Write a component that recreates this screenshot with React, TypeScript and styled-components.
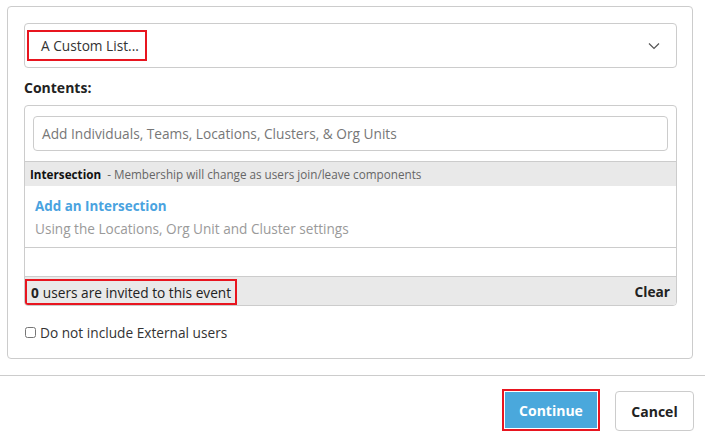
import styled, { createGlobalStyle } from "styled-components";

const GlobalStyle = createGlobalStyle`
  html, body {
    margin: 0;
    padding: 0;
    background: #fff;
  }
  body {
    font-family: "Open Sans", "Liberation Sans", Arial, sans-serif;
    color: #333;
  }
`;

const Page = styled.div`
  width: 705px;
  height: 435px;
  display: flex;
  flex-direction: column;
  box-sizing: border-box;
  padding-top: 6px;
  overflow: hidden;
`;

const Panel = styled.div`
  box-sizing: border-box;
  margin: 0 12px 0 7px;
  height: 353px;
  border: 1px solid #cccccc;
  border-radius: 4px;
  padding: 16px 15px 0 16px;
  display: flex;
  flex-direction: column;
`;

const Select = styled.div`
  box-sizing: border-box;
  height: 45px;
  border: 1px solid #cccccc;
  border-radius: 4px;
  display: flex;
  align-items: center;
  justify-content: space-between;
  padding: 0 16px 0 2px;
`;

const Highlight = styled.span`
  box-sizing: border-box;
  display: inline-flex;
  align-items: center;
  border: 2px solid #e8151f;
`;

const SelectValue = styled(Highlight)`
  height: 31px;
  padding: 0 6px 0 12px;
  font-size: 13.7px;
  color: #333;
`;

const Label = styled.div`
  margin-top: 10px;
  font-size: 14px;
  font-weight: 700;
  color: #222;
  line-height: 20px;
`;

const ContentsBox = styled.div`
  box-sizing: border-box;
  margin-top: 7px;
  height: 201px;
  border: 1px solid #cccccc;
  border-radius: 4px;
  display: flex;
  flex-direction: column;
  overflow: hidden;
`;

const InputWrap = styled.div`
  padding: 10px 8px;
`;

const SearchInput = styled.div`
  box-sizing: border-box;
  height: 35px;
  border: 1px solid #cccccc;
  border-radius: 4px;
  display: flex;
  align-items: center;
  padding-left: 8px;
  font-size: 13.7px;
  color: #777;
`;

const GrayBar = styled.div`
  box-sizing: border-box;
  background: #e9e9e9;
  border-top: 1px solid #cccccc;
  display: flex;
  align-items: center;
`;

const IntersectionBar = styled(GrayBar)`
  height: 25px;
  padding-left: 5px;
  font-size: 11.7px;
  color: #666;
  white-space: nowrap;

  b {
    color: #111;
    font-weight: 700;
    margin-right: 6px;
  }
`;

const IntersectionBody = styled.div`
  box-sizing: border-box;
  height: 61px;
  padding: 10px 10px 0;
  display: flex;
  flex-direction: column;
  gap: 3px;
`;

const AddLink = styled.a`
  font-size: 13.4px;
  font-weight: 700;
  color: #4aa3df;
  text-decoration: none;
  line-height: 20px;
`;

const Hint = styled.div`
  font-size: 13.6px;
  color: #9a9a9a;
  line-height: 20px;
`;

const Spacer = styled.div`
  height: 28px;
  border-top: 1px solid #cccccc;
`;

const CountBar = styled(GrayBar)`
  flex: 1;
  justify-content: space-between;
  align-items: flex-end;
  padding-right: 6px;
`;

const CountText = styled(Highlight)`
  height: 26px;
  padding: 0 4px 0 4px;
  font-size: 13.7px;
  color: #222;
  b {
    margin-right: 4px;
  }
`;

const ClearLink = styled.span`
  font-size: 13.7px;
  font-weight: 700;
  color: #222;
  align-self: center;
`;

const CheckRow = styled.label`
  display: flex;
  align-items: center;
  margin-top: 17px;
  font-size: 13.7px;
  color: #333;
  gap: 4px;

  input {
    margin: 0 0 0 1px;
    width: 11px;
    height: 11px;
  }
`;

const Divider = styled.div`
  margin-top: 16px;
  border-top: 1px solid #cccccc;
`;

const Actions = styled.div`
  display: flex;
  justify-content: flex-end;
  align-items: center;
  gap: 15px;
  padding: 13px 11px 0 0;
`;

const PrimaryFrame = styled(Highlight)`
  width: 98px;
  height: 42px;
  padding: 1px;
`;

const PrimaryButton = styled.button`
  width: 100%;
  height: 100%;
  border: none;
  background: #4aa8dc;
  color: #fff;
  font-family: inherit;
  font-size: 14px;
  font-weight: 700;
`;

const SecondaryButton = styled.button`
  box-sizing: border-box;
  width: 79px;
  height: 40px;
  border: 1px solid #cccccc;
  border-radius: 4px;
  background: #fff;
  color: #222;
  font-family: inherit;
  font-size: 14px;
  font-weight: 700;
  margin-top: 2px;
`;

function Chevron() {
  return (
    <svg width="12" height="8" viewBox="0 0 12 8" fill="none">
      <path d="M1 1.5 L6 6.5 L11 1.5" stroke="#555" strokeWidth="1.2" />
    </svg>
  );
}

export default function App() {
  return (
    <>
      <GlobalStyle />
      <Page>
        <Panel>
          <Select>
            <SelectValue>A Custom List...</SelectValue>
            <Chevron />
          </Select>
          <Label>Contents:</Label>
          <ContentsBox>
            <InputWrap>
              <SearchInput>
                Add Individuals, Teams, Locations, Clusters, &amp; Org Units
              </SearchInput>
            </InputWrap>
            <IntersectionBar>
              <b>Intersection</b>- Membership will change as users join/leave
              components
            </IntersectionBar>
            <IntersectionBody>
              <AddLink href="#">Add an Intersection</AddLink>
              <Hint>Using the Locations, Org Unit and Cluster settings</Hint>
            </IntersectionBody>
            <Spacer />
            <CountBar>
              <CountText>
                <b>0</b>users are invited to this event
              </CountText>
              <ClearLink>Clear</ClearLink>
            </CountBar>
          </ContentsBox>
          <CheckRow>
            <input type="checkbox" />
            Do not include External users
          </CheckRow>
        </Panel>
        <Divider />
        <Actions>
          <PrimaryFrame>
            <PrimaryButton>Continue</PrimaryButton>
          </PrimaryFrame>
          <SecondaryButton>Cancel</SecondaryButton>
        </Actions>
      </Page>
    </>
  );
}
